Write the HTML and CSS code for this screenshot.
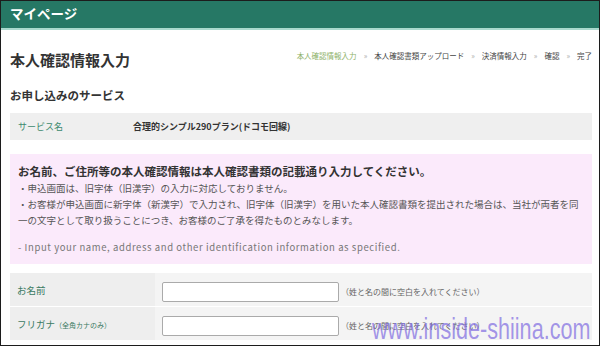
FILE: index.html
```html
<!DOCTYPE html>
<html lang="ja">
<head>
<meta charset="UTF-8">
<meta name="viewport" content="width=device-width, initial-scale=1.0">
<title>マイページ - 本人確認情報入力</title>
<link rel="stylesheet" href="styles.css">
</head>
<body>
<div class="page">
  <div class="topbar">
    <span>マイページ</span>
  </div>
  <div class="content">
    <div class="title-row">
      <h1>本人確認情報入力</h1>
      <ol class="steps">
        <li class="current">本人確認情報入力</li>
        <li>本人確認書類アップロード</li>
        <li>決済情報入力</li>
        <li>確認</li>
        <li>完了</li>
      </ol>
    </div>
    <h2>お申し込みのサービス</h2>
    <table class="service">
      <tr>
        <th>サービス名</th>
        <td>合理的シンプル290プラン(ドコモ回線)</td>
      </tr>
    </table>
    <div class="notice">
      <p class="notice-title">お名前、ご住所等の本人確認情報は本人確認書類の記載通り入力してください。</p>
      <p>・申込画面は、旧字体（旧漢字）の入力に対応しておりません。</p>
      <p>・お客様が申込画面に新字体（新漢字）で入力され、旧字体（旧漢字）を用いた本人確認書類を提出された場合は、当社が両者を同一の文字として取り扱うことにつき、お客様のご了承を得たものとみなします。</p>
      <p class="notice-en">- Input your name, address and other identification information as specified.</p>
    </div>
    <table class="form">
      <tr>
        <th>お名前</th>
        <td><input type="text"><span class="hint">（姓と名の間に空白を入れてください）</span></td>
      </tr>
      <tr>
        <th>フリガナ<small>（全角カナのみ）</small></th>
        <td><input type="text"><span class="hint">（姓と名の間に空白を入れてください）</span></td>
      </tr>
    </table>
  </div>
  <div class="watermark">www.inside-shiina.com</div>
</div>
</body>
</html>
```

FILE: styles.css
```css
body {
  margin: 0;
  padding: 0;
  background: #fff;
  font-family: "Noto Sans CJK JP", "Noto Sans", sans-serif;
  color: #333;
}
.page {
  position: relative;
  width: 600px;
  height: 346px;
  box-sizing: border-box;
  border: 1px solid #1c1c1c;
  overflow: hidden;
}
.topbar {
  height: 27px;
  background: #267865;
  border-bottom: 2px solid #a9d9cd;
  padding-left: 9px;
  color: #fff;
  font-size: 13.5px;
  font-weight: bold;
  line-height: 25px;
}
.content {
  padding: 0 7px 0 9px;
}
.title-row {
  display: flex;
  justify-content: space-between;
  align-items: flex-start;
  margin-top: 20px;
}
h1 {
  margin: 0;
  font-size: 15px;
  line-height: 20px;
  font-weight: bold;
  color: #333;
}
.steps {
  display: flex;
  margin: 0;
  padding: 0;
  list-style: none;
  font-size: 7.5px;
  line-height: 12px;
  color: #444;
}
.steps li + li::before {
  content: "»";
  color: #aaa;
  margin: 0 7px;
}
.steps .current {
  color: #8fb26a;
}
h2 {
  margin: 17px 0 0;
  font-size: 11.5px;
  line-height: 16px;
  font-weight: bold;
  color: #333;
}
.service {
  width: 100%;
  margin-top: 10px;
  border-collapse: collapse;
  background: #efefef;
  font-size: 9px;
}
.service th, .service td {
  height: 27px;
  padding: 0;
  text-align: left;
}
.service th {
  width: 115px;
  padding-left: 8px;
  color: #3d8a6e;
  font-weight: normal;
}
.service td {
  font-weight: bold;
  color: #333;
}
.notice {
  margin-top: 14px;
  padding: 8px 8px 9px 8px;
  background: #fbeafb;
  font-size: 9.5px;
  line-height: 16px;
  color: #555;
}
.notice p {
  margin: 0;
}
.notice .notice-title {
  font-size: 11.5px;
  font-weight: bold;
  color: #333;
  line-height: 18px;
}
.notice .notice-en {
  margin-top: 11px;
  font-size: 9.5px;
  letter-spacing: 0.6px;
  color: #777;
}
.form {
  width: 100%;
  margin-top: 9px;
  border-collapse: collapse;
}
.form th, .form td {
  height: 33px;
  padding: 0;
  border-bottom: 1px solid #fff;
  text-align: left;
  vertical-align: middle;
}
.form th {
  width: 145px;
  padding-left: 7px;
  box-sizing: border-box;
  background: #eeeeee;
  color: #3a7a62;
  font-size: 9.5px;
  font-weight: normal;
}
.form th small {
  font-size: 7px;
}
.form td {
  padding-left: 7px;
  background: #f4f4f4;
}
.form input {
  width: 177px;
  height: 20px;
  box-sizing: border-box;
  margin: 0;
  border: 1px solid #aaa;
  border-radius: 2px;
  background: #fff;
  vertical-align: middle;
}
.hint {
  margin-left: 2px;
  font-size: 8px;
  color: #666;
  vertical-align: middle;
}
.watermark {
  position: absolute;
  right: 9px;
  bottom: 1px;
  font-family: "Liberation Sans", Arial, sans-serif;
  font-size: 30px;
  line-height: 30px;
  color: rgba(125, 105, 225, 0.7);
  transform: scaleX(0.72);
  transform-origin: right bottom;
}
```
